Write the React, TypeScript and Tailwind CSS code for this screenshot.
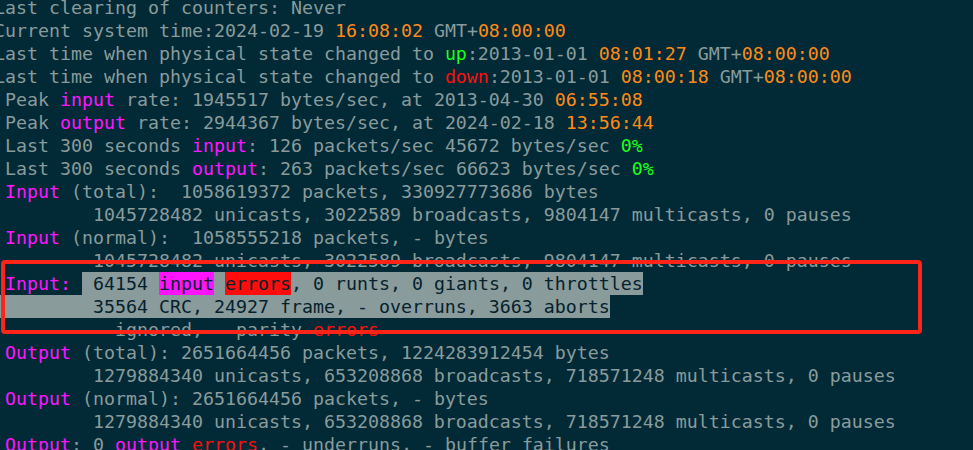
import React from 'react'

type Seg = [string, string?]

// terminal colours
const fg = 'text-[#8a9b9c]'
const orange = 'text-[#ff8a17]'
const green = 'text-[#1cff1c]'
const red = 'text-[#ff0d0d]'
const pink = 'text-[#ff14ff]'
const sel = 'bg-[#8a9b9c] text-[#04222c]'

const lines: Seg[][] = [
  [['Last clearing of counters: Never']],
  [['Current system time:2024-02-19 '], ['16:08:02', orange], [' GMT+'], ['08:00:00', orange]],
  [['Last time when physical state changed to '], ['up', green], [':2013-01-01 '], ['08:01:27', orange], [' GMT+'], ['08:00:00', orange]],
  [['Last time when physical state changed to '], ['down', red], [':2013-01-01 '], ['08:00:18', orange], [' GMT+'], ['08:00:00', orange]],
  [[' Peak '], ['input', pink], [' rate: 1945517 bytes/sec, at 2013-04-30 '], ['06:55:08', orange]],
  [[' Peak '], ['output', pink], [' rate: 2944367 bytes/sec, at 2024-02-18 '], ['13:56:44', orange]],
  [[' Last 300 seconds '], ['input', pink], [': 126 packets/sec 45672 bytes/sec '], ['0%', green]],
  [[' Last 300 seconds '], ['output', pink], [': 263 packets/sec 66623 bytes/sec '], ['0%', green]],
  [[' '], ['Input', pink], [' (total):  1058619372 packets, 330927773686 bytes']],
  [['         1045728482 unicasts, 3022589 broadcasts, 9804147 multicasts, 0 pauses']],
  [[' '], ['Input', pink], [' (normal):  1058555218 packets, - bytes']],
  [['         1045728482 unicasts, 3022589 broadcasts, 9804147 multicasts, 0 pauses']],
  [
    [' '],
    ['Input:', pink],
    [' '],
    [' 64154 ', sel],
    ['input', 'bg-[#ff14ff] text-[#04222c]'],
    [' ', sel],
    ['errors', 'bg-[#ff0d0d] text-[#04222c]'],
    [', 0 runts, 0 giants, 0 throttles', sel],
  ],
  [['         35564 CRC, 24927 frame, - overruns, 3663 aborts', sel]],
  [['         - ignored, - parity '], ['errors', red]],
  [[' '], ['Output', pink], [' (total): 2651664456 packets, 1224283912454 bytes']],
  [['         1279884340 unicasts, 653208868 broadcasts, 718571248 multicasts, 0 pauses']],
  [[' '], ['Output', pink], [' (normal): 2651664456 packets, - bytes']],
  [['         1279884340 unicasts, 653208868 broadcasts, 718571248 multicasts, 0 pauses']],
  [[' '], ['Output', pink], [': 0 '], ['output', pink], [' '], ['errors', red], [', - underruns, - buffer failures']],
]

export default function App() {
  return (
    <div className="relative h-[450px] w-[973px] overflow-hidden bg-[#012a36]">
      <div className={`-ml-[6px] -mt-[4px] flex flex-col font-['DejaVu_Sans_Mono',monospace] text-[18.27px] leading-[23px] ${fg}`}>
        {lines.map((line, i) => (
          <div key={i} className="h-[23px] whitespace-pre">
            {line.map(([t, c], j) => (
              <span key={j} className={`inline-block h-[23px] align-top ${c ?? ''}`}>
                {t}
              </span>
            ))}
          </div>
        ))}
      </div>
      {/* red annotation box drawn over the errors block */}
      <div className="pointer-events-none absolute left-[1px] top-[260px] h-[74px] w-[921px] rounded-[4px] border-[4.5px] border-[#ff2418]" />
    </div>
  )
}
